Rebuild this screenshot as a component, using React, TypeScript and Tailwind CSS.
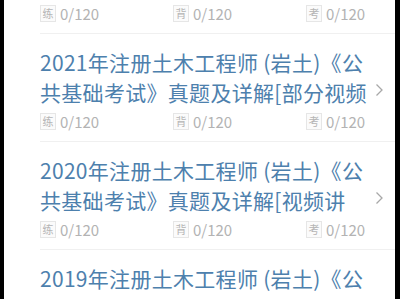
import React from "react";

type Item = { l1: string; l2: string };

const items: Item[] = [
  { l1: "2022年注册土木工程师 (岩土)《公", l2: "共基础考试》真题及详解" },
  { l1: "2021年注册土木工程师 (岩土)《公", l2: "共基础考试》真题及详解[部分视频" },
  { l1: "2020年注册土木工程师 (岩土)《公", l2: "共基础考试》真题及详解[视频讲" },
  { l1: "2019年注册土木工程师 (岩土)《公", l2: "共基础考试》真题及详解" },
];

function Badge({ ch }: { ch: string }) {
  return (
    <span className="flex h-[17px] w-[16px] items-center justify-center border border-[#e6e6e6] bg-[#fbfbfb] text-[11px] leading-none text-[#b5b5b5]">
      {ch}
    </span>
  );
}

function Stat({ ch, w }: { ch: string; w: string }) {
  return (
    <div className={`flex items-center gap-[4px] ${w}`}>
      <Badge ch={ch} />
      <span className="text-[15px] leading-none text-[#b3b3b3]">0/120</span>
    </div>
  );
}

function Row({ item }: { item: Item }) {
  return (
    <div className="flex border-b border-[#f0f0f0] pt-[13px] pb-[8px]">
      <div className="w-[328px] flex flex-col">
        <div className="text-[21px] leading-[30px] tracking-[0.3px] text-[#4d80ad] whitespace-nowrap overflow-hidden">
          <div>{item.l1}</div>
          <div>{item.l2}</div>
        </div>
        <div className="mt-[2px] flex h-[24px] items-center">
          <Stat ch="练" w="w-[133px]" />
          <Stat ch="背" w="w-[133px]" />
          <Stat ch="考" w="" />
        </div>
      </div>
      <div className="flex flex-1 items-center pl-[7px]">
        <svg width="9" height="14" viewBox="0 0 9 14" fill="none">
          <path d="M1.5 1.5 L7 7 L1.5 12.5" stroke="#a8a8a8" strokeWidth="1.3" />
        </svg>
      </div>
    </div>
  );
}

export default function App() {
  return (
    <div
      className="flex h-[299px] w-[400px] overflow-hidden bg-black"
      style={{ fontFamily: '"Noto Sans CJK SC", "Noto Sans", sans-serif' }}
    >
      <div className="ml-[4px] h-full w-[391px] overflow-hidden bg-white">
        <div className="ml-[36px] mt-[-74px] flex flex-col">
          {items.map((it, i) => (
            <Row key={i} item={it} />
          ))}
        </div>
      </div>
    </div>
  );
}
